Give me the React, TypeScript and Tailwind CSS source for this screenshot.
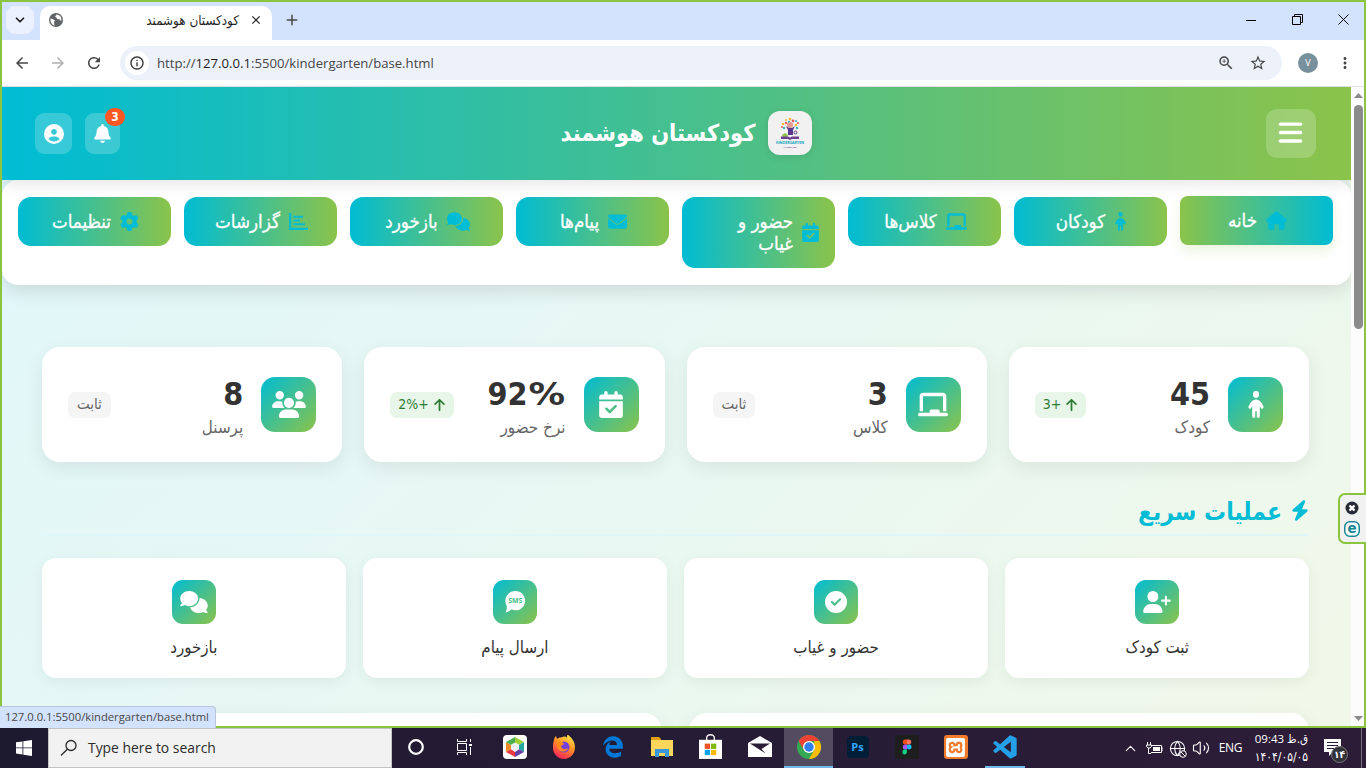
import React from "react";
import {
  FaArrowUp, FaBars, FaBell, FaBolt, FaCalendarCheck, FaChalkboard, FaChild, FaCircleCheck,
  FaCircleUser, FaComments, FaEnvelope, FaGear, FaHouse, FaUserPlus, FaUsers, FaEdgeLegacy,
} from "react-icons/fa6";
import { MdArrowBack, MdArrowForward, MdRefresh, MdInfoOutline, MdStarBorder, MdZoomIn, MdMoreVert, MdClose, MdAdd } from "react-icons/md";
import { BiLogoVisualStudio } from "react-icons/bi";
import { SiXampp } from "react-icons/si";
import { ChevronDown, ChevronUp, Volume2, Globe } from "lucide-react";

type IconType = React.ComponentType<{ className?: string }>;

function SmsBubble({ className }: { className?: string }) {
  return (
    <svg viewBox="0 0 22 24" className={className}>
      <path d="M11.500 0C17.500 0 22 4.600 22 10.500S17.500 21 11.500 21c-1.700 0-3.200-.3-4.500-1-1.500 1.800-3.800 3-6.500 3.500C1.800 22 2.300 19.500 2 16.500 1 14.700.5 12.700.5 10.500.5 4.600 5.500 0 11.500 0z" fill="currentColor" />
      <text x="11.300" y="13.300" textAnchor="middle" fontSize="7.500" fontWeight="700" textLength="15.500" lengthAdjust="spacingAndGlyphs" fill="#45c088" fontFamily="Open Sans">SMS</text>
    </svg>
  );
}

function ReportBars({ className }: { className?: string }) {
  return (
    <svg viewBox="0 0 19 17" className={className} fill="none" stroke="currentColor">
      <path d="M1.200 0v15.800H19" strokeWidth="2.200" />
      <path d="M4.500 3.800H14M4.500 7.500h6.500M4.500 11.300H16" strokeWidth="2" />
    </svg>
  );
}

function BrowserTabs() {
  return (
    <div className="flex h-[38px] shrink-0 items-start bg-[#d3e3fd]">
      <div className="ml-1 mt-1 flex h-7 w-7 items-center justify-center rounded-[9px] bg-[#ebf1fe]">
        <ChevronDown className="h-[14px] w-[14px] text-[#1f1f1f]" strokeWidth={3} />
      </div>
      <div className="ml-[6px] mt-1 flex h-[34px] w-[232px] items-center rounded-t-[10px] bg-white pl-2 pr-[9px]">
        <svg viewBox="0 0 16 16" className="mb-[6px] h-4 w-4">
          <circle cx="8" cy="8" r="7" fill="#5f6368" />
          <path d="M2.500 6.500c1.500.5 3 .5 4.500 2l-1 1.500.5 3.500c-2.500-.5-4.500-3-4-7zM8.500 2.500l-1.500 2 1.500 1 .5 1.500 3 .5 1 2c1-2.500 0-5.500-2.500-6.500z" fill="#fff" />
        </svg>
        <span dir="rtl" className="mb-1 ml-auto text-[13.300px] leading-4 text-[#1f1f1f]">کودکستان هوشمند</span>
        <MdClose className="mb-[6px] ml-[10px] h-[14px] w-[14px] text-[#1f1f1f]" />
      </div>
      <MdAdd className="ml-[11px] mt-[9px] h-[18px] w-[18px] text-[#474747]" />
      <div className="ml-auto flex items-center">
        <svg className="mt-[10px] mr-[35px] h-[11px] w-[11px]" viewBox="0 0 11 11"><path d="M0 7.500h10" stroke="#000" /></svg>
        <svg className="mt-[12px] mr-[35px] h-[11px] w-[11px]" viewBox="0 0 11 11" fill="none" stroke="#000"><path d="M.5 2.500h8v8h-8zM2.500 2.500v-2h8v8h-2" /></svg>
        <svg className="mt-[12px] mr-[15px] h-[11px] w-[11px]" viewBox="0 0 11 11" fill="none" stroke="#000"><path d="M.5.5l10 10M10.500.5l-10 10" /></svg>
      </div>
    </div>
  );
}

function AddressBar() {
  return (
    <div className="flex h-[47px] shrink-0 items-center border-b border-[#dcdfe3] bg-white">
      <MdArrowBack className="ml-[11px] h-[18px] w-[18px] text-[#474747]" />
      <MdArrowForward className="ml-[18px] h-[18px] w-[18px] text-[#b0b0b0]" />
      <MdRefresh className="ml-[18px] h-[18px] w-[18px] text-[#474747]" />
      <div className="ml-[17px] flex h-[34px] w-[1162px] items-center rounded-full bg-[#ecf1fa] pl-[5px]">
        <span className="flex h-6 w-6 items-center justify-center rounded-full bg-white">
          <MdInfoOutline className="h-4 w-4 text-[#333]" />
        </span>
        <span className="mt-px ml-[8px] font-['Open_Sans',sans-serif] text-[13.150px] text-[#474747]">
          http://<span className="text-[#1f1f1f]">127.0.0.1</span>:5500/kindergarten/base.html
        </span>
        <MdZoomIn className="ml-auto h-[18px] w-[18px] text-[#474747]" />
        <MdStarBorder className="ml-[14px] mr-[15px] h-[18px] w-[18px] text-[#474747]" />
      </div>
      <span className="ml-4 flex h-5 w-5 items-center justify-center rounded-full bg-[#78909c] font-['Open_Sans',sans-serif] text-[9px] text-white">V</span>
      <MdMoreVert className="ml-[18px] h-[18px] w-[18px] text-[#474747]" />
    </div>
  );
}

function Logo() {
  return (
    <div className="mb-[2px] flex h-11 w-11 items-center justify-center rounded-[12px] bg-[#f1f1f1] shadow-[0_2px_8px_rgba(0,0,0,0.1)]">
      <svg viewBox="0 0 44 44" className="h-11 w-11">
        <g fill="#f6b936"><circle cx="15" cy="13" r="1.300" /><circle cx="22" cy="8" r="1.300" /><circle cx="28" cy="14" r="1.300" /><circle cx="18" cy="9" r="1" /></g>
        <g fill="#ee5d63"><circle cx="18" cy="12" r="1.200" /><circle cx="25" cy="10" r="1.400" /><circle cx="30" cy="12" r="1.100" /><circle cx="14" cy="16" r="1" /></g>
        <g fill="#38b6c9"><circle cx="21" cy="11" r="1.200" /><circle cx="28" cy="10" r="1" /><circle cx="16" cy="17" r="1.200" /><circle cx="29" cy="17" r="1.200" /></g>
        <circle cx="22" cy="14" r="3" fill="#e59a91" />
        <path d="M18 15l2 4v5h5v-5l2-4-3 2h-3z" fill="#59378c" />
        <circle cx="27.500" cy="21.500" r="1.500" fill="none" stroke="#59378c" strokeWidth="1" />
        <path d="M14 24l3-2 3 2-1 2h-4z" fill="#8bc34a" />
        <path d="M13 25.500h7l2 1 2-1h7v2.500h-7l-2 1-2-1h-7z" fill="#70408f" />
        <text x="22" y="33" textAnchor="middle" fontSize="4.200" fontWeight="900" textLength="28" lengthAdjust="spacingAndGlyphs" fill="#14a5c2" fontFamily="Lato">KINDERGARTEN</text>
        <text x="22" y="36.800" textAnchor="middle" fontSize="2.200" textLength="13" fill="#70408f" fontFamily="Lato">TAGLINE HERE</text>
      </svg>
    </div>
  );
}

function Header() {
  return (
    <header className="relative z-10 flex h-[93px] shrink-0 items-center justify-between bg-linear-to-r/srgb from-[#00bcd4] to-[#8bc34a] pl-[33px] pr-[35px] shadow-[0_4px_15px_rgba(0,0,0,0.1)]">
      <div className="flex gap-[13px]">
        <div className="flex h-[41px] w-[37px] items-center justify-center rounded-[9px] bg-white/20">
          <FaCircleUser className="h-[20px] w-[20px] text-white" />
        </div>
        <div className="relative flex h-[41px] w-[35px] items-center justify-center rounded-[9px] bg-white/20">
          <FaBell className="h-[19px] w-[19px] text-white" />
          <span className="absolute -top-[5px] -right-[5px] flex h-[18px] w-5 items-center justify-center rounded-full bg-[#ff5722] text-[12px] font-bold text-white">3</span>
        </div>
      </div>
      <div className="ml-[-13px] flex items-center gap-[13px]">
        <h1 dir="rtl" className="text-[23.400px] font-bold text-white">کودکستان هوشمند</h1>
        <Logo />
      </div>
      <div className="flex h-[49px] w-[50px] items-center justify-center rounded-[11px] bg-white/20">
        <FaBars className="mb-[2px] h-[27px] w-[27px] text-white" />
      </div>
    </header>
  );
}

const navItems: { label: string; icon: IconType; size: string; wraps?: boolean }[] = [
  { label: "کودکان", icon: FaChild, size: "w-[13px] scale-x-90" },
  { label: "کلاس‌ها", icon: FaChalkboard, size: "w-[21px]" },
  { label: "حضور و\nغیاب", icon: FaCalendarCheck, size: "w-[17px]", wraps: true },
  { label: "پیام‌ها", icon: FaEnvelope, size: "w-[19px]" },
  { label: "بازخورد", icon: FaComments, size: "w-[23px]" },
  { label: "گزارشات", icon: ReportBars, size: "w-[19px]" },
  { label: "تنظیمات", icon: FaGear, size: "w-[19px]" },
];

function Nav() {
  return (
    <nav dir="rtl" className="flex h-[105px] shrink-0 items-start gap-[13px] rounded-[16px] bg-white pt-[17px] pr-[18px] pl-4 shadow-[0_6px_20px_rgba(0,0,0,0.12)]">
      <div className="-mt-px flex h-[49px] w-[153px] items-center justify-center gap-[9px] rounded-[8px] bg-linear-to-r/srgb from-[#8bc34a] to-[#00bcd4] pl-[2px] text-[18.600px] text-white shadow-[0_6px_12px_rgba(139,195,74,0.18)]">
        <FaHouse className="h-[19px] w-[21px] text-[#00bcd4]" />
        <span className="[-webkit-text-stroke:0.3px_white]">خانه</span>
      </div>
      {navItems.map(({ label, icon: Icon, size, wraps }) => (
        <div key={label} className="flex min-h-[49px] w-[153px] items-center justify-center gap-[9px] rounded-[13px] bg-linear-to-r/srgb from-[#00bcd4] to-[#8bc34a] py-[13.500px] pr-[16px] pl-[18px] text-[18.600px] leading-[22px] text-white">
          <Icon className={`h-[19px] shrink-0 text-[#00bcd4] ${size}`} />
          <span className={`whitespace-pre-line [-webkit-text-stroke:0.3px_white] ${wraps ? "flex-1" : ""}`}>{label}</span>
        </div>
      ))}
    </nav>
  );
}

const stats: { value: string; unit?: string; label: string; icon: IconType; size: string; change?: string }[] = [
  { value: "45", label: "کودک", icon: FaChild, size: "w-[20px] scale-x-90", change: "3+" },
  { value: "3", label: "کلاس", icon: FaChalkboard, size: "w-[30px]" },
  { value: "92", unit: "%", label: "نرخ حضور", icon: FaCalendarCheck, size: "w-[24px]", change: "2%+" },
  { value: "8", label: "پرسنل", icon: FaUsers, size: "w-[34px]" },
];

function Stats() {
  return (
    <section className="mt-[62px] grid grid-cols-4 gap-[22px]">
      {stats.map(({ value, unit, label, icon: Icon, size, change }) => (
        <div key={label} className="flex h-[115px] items-center rounded-[18px] bg-white px-[26px] shadow-[0_6px_20px_rgba(0,0,0,0.08)]">
          <div className="flex h-[55px] w-[55px] items-center justify-center rounded-[14px] bg-linear-to-br/srgb from-[#00bcd4] to-[#8bc34a]">
            <Icon className={`h-[27px] text-white ${size}`} />
          </div>
          <div className="mr-[18px] pt-[7px]">
            <div dir="ltr" className="text-right text-[32px] leading-[35px] font-bold text-[#333]">
              {value}
              {unit && <span className="ml-[6px] inline-block origin-right scale-x-[1.14] font-['DejaVu_Sans',sans-serif]">{unit}</span>}
            </div>
            <div className="mt-[2px] text-[16.900px] leading-[26px] text-[#666]">{label}</div>
          </div>
          {change ? (
            <div className="mr-auto flex h-[26px] items-center gap-1 rounded-[7px] bg-[#e8f5e9] px-2 text-[14px] text-[#2e7d32]">
              <FaArrowUp className="h-[14px] w-[13px]" />
              <span dir="ltr">{change}</span>
            </div>
          ) : (
            <div className="mr-auto flex h-[26px] items-center rounded-[7px] bg-[#f5f5f5] px-[9px] text-[15px] text-[#666]">ثابت</div>
          )}
        </div>
      ))}
    </section>
  );
}

const actions: { label: string; icon: IconType; size: string }[] = [
  { label: "ثبت کودک", icon: FaUserPlus, size: "w-[28px]" },
  { label: "حضور و غیاب", icon: FaCircleCheck, size: "w-[22px]" },
  { label: "ارسال پیام", icon: SmsBubble, size: "w-[22px]" },
  { label: "بازخورد", icon: FaComments, size: "w-[28px]" },
];

function QuickActions() {
  return (
    <section>
      <h2 className="mt-[33px] flex h-[41px] items-start gap-[9px] border-b-2 border-[#e0f7fa] text-[24.400px] leading-[33px] font-bold text-[#00bcd4]">
        <FaBolt className="mt-[5px] h-[21px] w-[18px]" />
        <span>عملیات سریع</span>
      </h2>
      <div className="mt-[22px] grid grid-cols-4 gap-[17.600px]">
        {actions.map(({ label, icon: Icon, size }) => (
          <div key={label} className="flex h-[120px] flex-col items-center rounded-[14px] bg-white pt-[22px] shadow-[0_4px_15px_rgba(0,0,0,0.06)]">
            <div className="flex h-11 w-11 items-center justify-center rounded-[11px] bg-linear-to-br/srgb from-[#00bcd4] to-[#8bc34a]">
              <Icon className={`mb-px h-[22px] text-white ${size}`} />
            </div>
            <span className="mt-[11px] text-[16.800px] leading-6 text-[#333]">{label}</span>
          </div>
        ))}
      </div>
      <div className="mt-[35px] grid grid-cols-2 gap-[27px]">
        <div className="h-[60px] rounded-[18px] bg-white shadow-[0_6px_20px_rgba(0,0,0,0.08)]" />
        <div className="h-[60px] rounded-[18px] bg-white shadow-[0_6px_20px_rgba(0,0,0,0.08)]" />
      </div>
    </section>
  );
}

function ScrollBar() {
  return (
    <div className="flex w-[13px] shrink-0 flex-col items-center bg-[#fcfcfc]">
      <svg className="mt-[6px] ml-[2px] h-[5px] w-[9px] shrink-0" viewBox="0 0 9 5"><path d="M0 5l4.500-5L9 5z" fill="#8b8b8b" /></svg>
      <div className="mt-[7px] ml-[2px] h-[224px] w-[9px] rounded-full bg-[#8b8b8b]" />
      <svg className="mt-auto mb-[5px] ml-[2px] h-[5px] w-[9px]" viewBox="0 0 9 5"><path d="M0 0l4.500 5L9 0z" fill="#8b8b8b" /></svg>
    </div>
  );
}

function EdgeWidget() {
  return (
    <div className="absolute top-[493px] right-0 flex h-[51px] w-[28px] flex-col items-center justify-center gap-[6px] rounded-l-[7px] border-2 border-r-0 border-[#8bc540] bg-[#f1f1f1] pr-[2px]">
      <svg viewBox="0 0 14 14" className="h-[14px] w-[14px]"><circle cx="7" cy="7" r="6.500" fill="#252a35" /><path d="M4.500 4.500l5 5M9.500 4.500l-5 5" stroke="#fff" strokeWidth="2.400" /></svg>
      <svg viewBox="0 0 16 16" className="h-4 w-4">
        <rect x=".75" y=".75" width="14.500" height="14.500" rx="5" fill="#fff" stroke="#168894" strokeWidth="1.500" />
        <text x="8" y="12" textAnchor="middle" fontSize="13.500" fontWeight="700" fill="#168894" fontFamily="DejaVu Sans">e</text>
      </svg>
    </div>
  );
}

function Slot({ children, active, open }: { children: React.ReactNode; active?: boolean; open?: boolean }) {
  return (
    <div className={`flex h-10 items-center justify-center border-b-2 ${open ? "mx-[4.500px] w-10" : "w-[49px]"} ${active ? "border-[#76b9ed] bg-[#534b60]" : open ? "border-[#76b9ed]" : "border-transparent"}`}>
      {children}
    </div>
  );
}

function TaskApps() {
  return (
    <div className="flex">
      <Slot><svg viewBox="0 0 18 18" className="mr-[2px] h-[18px] w-[18px]"><circle cx="9" cy="9" r="6.800" fill="none" stroke="#fff" strokeWidth="2.200" /></svg></Slot>
      <Slot><svg viewBox="0 0 16 16" className="mr-[3px] h-4 w-4" fill="none" stroke="#fff"><path d="M1.500 0v2.500h9V0M1.500 4.500h9v7h-9zM1.500 16v-2.500h9V16M14.500 0v3M14.500 8v8" /><path d="M13 5h3v2h-3z" fill="#fff" stroke="none" /></svg></Slot>
      <Slot>
        <svg viewBox="0 0 24 24" className="h-6 w-6">
          <rect width="24" height="24" rx="4" fill="#fff" />
          <path d="M12 2l9 5-5 3-4-2z" fill="#a1cf38" /><path d="M21 7v10l-5-3v-4z" fill="#24a6a1" /><path d="M21 17l-9 5v-5l4-3z" fill="#6441a5" /><path d="M12 22l-9-5 5-3 4 3z" fill="#e9383f" /><path d="M3 17V7l5 3v4z" fill="#f28a25" /><path d="M3 7l9-5v6l-4 2z" fill="#4cad50" />
          <path d="M12 7.500l4 2.200v4.600l-4 2.200-4-2.200V9.700z" fill="#f0f0f4" />
        </svg>
      </Slot>
      <Slot>
        <svg viewBox="0 0 24 24" className="h-6 w-6">
          <defs><linearGradient id="fox" x1=".8" y1="0" x2=".3" y2="1"><stop offset="0" stopColor="#fff04c" /><stop offset=".45" stopColor="#ff9125" /><stop offset="1" stopColor="#f8205c" /></linearGradient></defs>
          <path d="M2 5c0-2 1-3 2-4l1 3c1-1 2-1.500 4-1.500C12 1 14 1 15 3c0-1.500 0-2.500.5-3.500C19 2 23 6 23 12.500 23 19 18 24 12 24S1 19 1 13c0-3 0-5 1-8z" fill="url(#fox)" />
          <circle cx="12" cy="12" r="5.500" fill="#7542d9" /><path d="M5 7c3-1 6 0 7 2l-3 2c1 4 4 4 7 2-2 6-10 4-11-2z" fill="#ff8a1c" />
        </svg>
      </Slot>
      <Slot><FaEdgeLegacy className="h-[22px] w-[22px] text-[#0078d7]" /></Slot>
      <Slot>
        <svg viewBox="0 0 22 20" className="h-5 w-[22px]"><path d="M0 0h8l2 2v3H0z" fill="#e39e13" /><path d="M0 3h22v16H0z" fill="#ffd65c" /><path d="M4 12h14v8h-4v-4H8v4H4z" fill="#3b97db" /></svg>
      </Slot>
      <Slot>
        <svg viewBox="0 0 24 26" className="mb-px h-[25px] w-[23px]"><path d="M8 7V4a4 3.300 0 018 0v3" fill="none" stroke="#fff" strokeWidth="1.400" /><path d="M0 6h24v20H0z" fill="#fff" /><path d="M6 10h5.500v5.500H6z" fill="#f25022" /><path d="M12.500 10H18v5.500h-5.500z" fill="#7fba00" /><path d="M6 16.500h5.500V22H6z" fill="#00a4ef" /><path d="M12.500 16.500H18V22h-5.500z" fill="#ffb900" /></svg>
      </Slot>
      <Slot>
        <svg viewBox="0 0 24 22" className="h-[22px] w-6"><path d="M0 7l12-7 12 7v14H0z" fill="#fff" /><path d="M2 7.500h20L13.500 13l4 4.500L9 12z" fill="#291d37" /></svg>
      </Slot>
      <Slot active>
        <svg viewBox="0 0 24 24" className="h-6 w-6"><circle cx="12" cy="12" r="12" fill="#34a853" /><path d="M1.600 6A12 12 0 0122.400 6H12l-5.200 9z" fill="#ea4335" /><path d="M22.400 6A12 12 0 0112 24l5.200-9L17.200 6z" fill="#fbbc05" /><circle cx="12" cy="12" r="6" fill="#fff" /><circle cx="12" cy="12" r="4.700" fill="#3280f0" /></svg>
      </Slot>
      <Slot><span className="flex h-[22px] w-[22px] items-center justify-center rounded-[4px] bg-[#001e36] font-['Open_Sans',sans-serif] text-[11px] font-bold text-[#31a8ff]">Ps</span></Slot>
      <Slot>
        <svg viewBox="0 0 24 24" className="h-6 w-6"><rect width="24" height="24" rx="2" fill="#1e1e1e" /><path d="M12 4.500h-2a2.300 2.500 0 000 5h2z" fill="#f24e1e" /><path d="M12 4.500h2a2.300 2.500 0 010 5h-2z" fill="#ff7262" /><path d="M12 9.500h-2a2.300 2.500 0 000 5h2z" fill="#a259ff" /><circle cx="14.200" cy="12" r="2.400" fill="#1abcfe" /><path d="M12 14.500h-2a2.300 2.500 0 102 2.500z" fill="#0acf83" /></svg>
      </Slot>
      <Slot><span className="flex h-6 w-6 items-center justify-center rounded-[3px] bg-[#f27b2c]"><SiXampp className="h-[19px] w-[19px] text-white" /></span></Slot>
      <Slot open><BiLogoVisualStudio className="h-[28px] w-[28px] text-[#24a0e8]" /></Slot>
    </div>
  );
}

function Taskbar() {
  return (
    <footer className="flex h-10 shrink-0 items-center bg-linear-to-r from-[#1d1a30] via-[#251c35] to-[#2d1c38] font-['Open_Sans',sans-serif] text-white">
      <div className="flex w-12 justify-center">
        <svg viewBox="0 0 16 16" className="h-4 w-4" fill="#fff"><path d="M0 2.300l6.500-.9v6.100H0zM7.300 1.300L16 0v7.500H7.300zM0 8.300h6.500v6.200L0 13.600zM7.300 8.300H16V16l-8.700-1.300z" /></svg>
      </div>
      <div className="flex h-10 w-[344px] items-center border border-[#c3c3c3] bg-[#f2f2f2] pl-[11px] text-[#2b2b2b]">
        <svg viewBox="0 0 18 18" className="h-[18px] w-[18px]" fill="none" stroke="#2b2b2b" strokeWidth="1.300"><circle cx="11" cy="6.500" r="5" /><path d="M7.300 10.200L1 16.500" /></svg>
        <span className="ml-[10px] text-[13.900px]">Type here to search</span>
      </div>
      <TaskApps />
      <div className="ml-auto flex items-center">
        <ChevronUp className="h-[17px] w-[17px]" strokeWidth={1.600} />
        <svg viewBox="0 0 17 12" className="ml-[7px] h-3 w-[17px]" fill="none" stroke="#fff"><path d="M6 3.500h9.500v7H5M2.500 6v5.500H5M1.500 0v3M4.500 0v3M.5 3h5v1.500l-1.500 1.500h-2L.5 4.500z" /><path d="M7 5h7v4H7zM15.500 5h1v4h-1z" fill="#fff" stroke="none" /></svg>
        <span className="relative ml-[6px]">
          <Globe className="h-[17px] w-[17px]" strokeWidth={1.500} />
          <svg viewBox="0 0 8 8" className="absolute -right-px -bottom-px h-2 w-2"><circle cx="4" cy="4" r="3.300" fill="#2d1c38" stroke="#fff" /><path d="M2 2l4 4" stroke="#fff" /></svg>
        </span>
        <Volume2 className="ml-[6px] h-[18px] w-[18px]" strokeWidth={1.500} />
        <span className="ml-[9px] text-[12px] tracking-[-0.4px]">ENG</span>
        <div className="ml-[12px] flex w-[54px] flex-col items-end text-[11.500px] leading-[18px]">
          <span dir="ltr" className="whitespace-nowrap">09:43 <span dir="rtl" className="font-['DejaVu_Sans_Condensed','DejaVu_Sans',sans-serif]">ق.ظ</span></span>
          <span dir="ltr" className="font-['DejaVu_Sans_Condensed','DejaVu_Sans',sans-serif] text-[11.900px] whitespace-nowrap">۱۴۰۴/۰۵/۰۵</span>
        </div>
        <div className="relative ml-[16px] h-[18px] w-[17px]">
          <svg viewBox="0 0 17 17" className="h-[17px] w-[17px]"><path d="M0 0h17v13H9l-4 4v-4H0z" fill="#fff" /><path d="M3 3.500h11M3 6.500h11M3 9.500h7" stroke="#2d1c38" /></svg>
          <span className="absolute top-[7px] left-[7px] flex h-[17px] w-[17px] items-center justify-center rounded-full border border-[#777] bg-[#32323a] font-['DejaVu_Sans_Condensed',sans-serif] text-[10px] font-bold">۱۴</span>
        </div>
        <div className="ml-[20px] h-10 border-l border-[#77707f]" />
        <div className="w-[4px]" />
      </div>
    </footer>
  );
}

export default function App() {
  return (
    <div className="relative flex h-[768px] w-[1366px] flex-col overflow-hidden font-['DejaVu_Sans_Condensed','DejaVu_Sans',sans-serif]">
      <div className="flex h-[728px] flex-col border-2 border-[#8bc540]">
        <BrowserTabs />
        <AddressBar />
        <div className="flex min-h-0 flex-1">
          <main className="flex h-[639px] min-w-0 flex-1 flex-col overflow-hidden bg-linear-135/srgb from-[#e0f7fa] via-[#e8f8f3] to-[#f1f8e9]">
            <Header />
            <Nav />
            <div dir="rtl" className="pr-[42px] pl-10">
              <Stats />
              <QuickActions />
            </div>
          </main>
          <ScrollBar />
        </div>
      </div>
      <Taskbar />
      <EdgeWidget />
      <div className="absolute top-[706px] left-0 flex h-[22px] w-[216px] items-center rounded-tr-[4px] border-t border-r border-[#b9c5da] bg-[#d3e3fd] pl-[5px] font-['Open_Sans',sans-serif] text-[11.250px] whitespace-nowrap text-[#474747]">
        127.0.0.1:5500/kindergarten/base.html
      </div>
    </div>
  );
}
